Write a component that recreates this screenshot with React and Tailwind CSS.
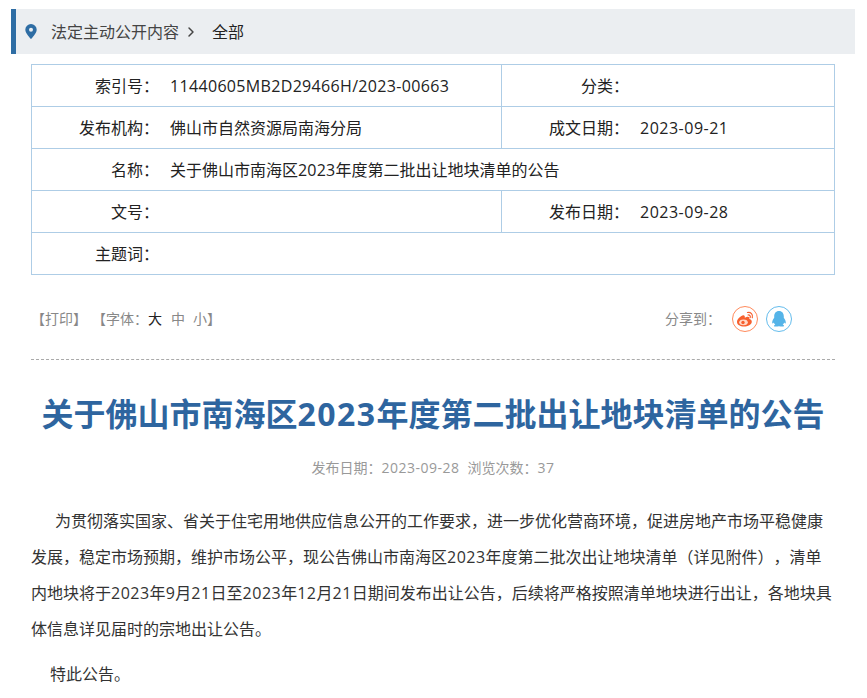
import { ChevronRight } from "lucide-react";

const font = { fontFamily: '"Open Sans", "Noto Sans CJK SC", sans-serif' };

// latin runs sit a little wider in the reference than Open Sans does
function L({ children }) {
  return <span className="tracking-[0.5px]">{children}</span>;
}

function Field({ label, children, span }) {
  return (
    <td colSpan={span} className="border border-[#aecde6] p-0">
      <div className="flex items-center">
        <span className="w-[127px] shrink-0 text-right">{label}：</span>
        <span className="ml-[11px]">{children}</span>
      </div>
    </td>
  );
}

function WeiboIcon() {
  return (
    <svg width="26" height="26" viewBox="0 0 26 26">
      <circle cx="13" cy="13" r="12.500" fill="none" stroke="#ff8a5c" />
      <path d="M10.500 9.500c-3 1.200-5.500 4-5.500 6.500 0 2.800 3.300 4.500 7 4.500s7.800-2 7.800-4.800c0-1.600-1.400-2.200-2.500-2.600.6-1.800-.8-2.800-2.800-2l-1.700.6c.4-1.800-.6-2.800-2.300-2.200z" fill="#f7602f" />
      <ellipse cx="11.500" cy="16.300" rx="4.300" ry="2.900" fill="#ffd9c9" />
      <circle cx="11" cy="16.500" r="1.700" fill="#f7602f" />
      <path d="M15.500 6.500c3.200-.7 5.800 2 4.800 5.200M16 9c1.600-.3 2.800 1 2.200 2.600" fill="none" stroke="#f7602f" strokeWidth="1.200" strokeLinecap="round" />
    </svg>
  );
}

function QQIcon() {
  return (
    <svg width="26" height="26" viewBox="0 0 26 26">
      <circle cx="13" cy="13" r="12.500" fill="none" stroke="#64bcec" />
      <path d="M13 5c-3.200 0-4.800 2.500-4.800 5.300v1.500c-1.200 1.500-2.200 3.500-2 5.200.2 1 1 .3 1.600-.6.300 1 .8 1.800 1.500 2.400-1 .4-1.600.9-1.300 1.400.4.600 3 .5 5 0 2 .5 4.600.6 5-.1.300-.5-.3-1-1.300-1.300.7-.6 1.200-1.400 1.500-2.400.6.900 1.400 1.600 1.600.6.200-1.700-.8-3.700-2-5.200v-1.500C17.800 7.500 16.200 5 13 5z" fill="#55b4e8" />
    </svg>
  );
}

export default function App() {
  return (
    <div className="h-[698px] w-[867px] overflow-hidden bg-white pt-[9px] pr-[12px] pl-[11px] [text-spacing-trim:space-all]" style={font}>
      <div className="flex h-[45px] items-center border-l-[5px] border-[#2e6da4] bg-[#ebeef1] pl-[9px] text-[16px] text-[#444]">
        <svg width="12" height="15" viewBox="0 0 12 15">
          <path fillRule="evenodd" d="M6 0a5.700 5.700 0 0 0-5.700 5.700C.3 9.500 6 15 6 15s5.700-5.500 5.700-9.300A5.700 5.700 0 0 0 6 0zm0 3.700a2 2 0 1 1 0 4 2 2 0 0 1 0-4z" fill="#2e6da4" />
        </svg>
        <span className="ml-[14px]">法定主动公开内容</span>
        <ChevronRight size={16} strokeWidth={2.2} className="ml-[4px] text-[#444]" />
        <span className="ml-[13px] text-[#222]">全部</span>
      </div>

      <div className="px-[20px]">
        <table className="mt-[10px] w-[804px] table-fixed border-collapse text-[16px] text-[#222]">
          <colgroup>
            <col className="w-[470px]" />
            <col />
          </colgroup>
          <tbody>
            <tr className="h-[42px]">
              <Field label="索引号"><span className="tracking-[0.33px]">11440605MB2D29466H/2023-00663</span></Field>
              <Field label="分类" />
            </tr>
            <tr className="h-[42px]">
              <Field label="发布机构">佛山市自然资源局南海分局</Field>
              <Field label="成文日期"><L>2023-09-21</L></Field>
            </tr>
            <tr className="h-[42px]">
              <Field label="名称" span={2}>关于佛山市南海区<span className="tracking-[0.2px]">2023</span>年度第二批出让地块清单的公告</Field>
            </tr>
            <tr className="h-[42px]">
              <Field label="文号" />
              <Field label="发布日期"><L>2023-09-28</L></Field>
            </tr>
            <tr className="h-[42px]">
              <Field label="主题词" span={2} />
            </tr>
          </tbody>
        </table>

        <div className="flex h-[85px] items-center justify-between border-b border-dashed border-[#aaa] pt-[3px] text-[14px] text-[#888]">
          <div className="flex items-center">
            <span>【打印】</span>
            <span className="ml-[5px]">【字体：</span>
            <span className="text-[#222]">大</span>
            <span className="ml-[9px]">中</span>
            <span className="ml-[8px]">小</span>
            <span>】</span>
          </div>
          <div className="mr-[43px] flex items-center">
            <span>分享到：</span>
            <span className="ml-[11px] flex gap-[8px]">
              <WeiboIcon />
              <QQIcon />
            </span>
          </div>
        </div>

        <h1 className="mt-[31px] text-center text-[32px] leading-[46px] font-bold whitespace-nowrap text-[#2e659f]">
          关于佛山市南海区<span className="tracking-[1.4px]">2023</span>年度第二批出让地块清单的公告
        </h1>

        <div className="mt-[21px] text-center text-[14px] leading-[20px] text-[#999]">
          <span>发布日期：<L>2023-09-28</L></span>
          <span className="ml-[8px]">浏览次数：<L>37</L></span>
        </div>

        <div className="mt-[25px] text-[16px] leading-[36px] text-[#333]">
          <p className="indent-[24px]">
            为贯彻落实国家、省关于住宅用地供应信息公开的工作要求，进一步优化营商环境，促进房地产市场平稳健康发展，稳定市场预期，维护市场公平，现公告佛山市南海区<L>2023</L>年度第二批次出让地块清单（详见附件），清单内地块将于<L>2023</L>年<L>9</L>月<L>21</L>日至<L>2023</L>年<L>12</L>月<L>21</L>日期间发布出让公告，后续将严格按照清单地块进行出让，各地块具体信息详见届时的宗地出让公告。
          </p>
          <p className="mt-[9px] indent-[19px]">特此公告。</p>
        </div>
      </div>
    </div>
  );
}
